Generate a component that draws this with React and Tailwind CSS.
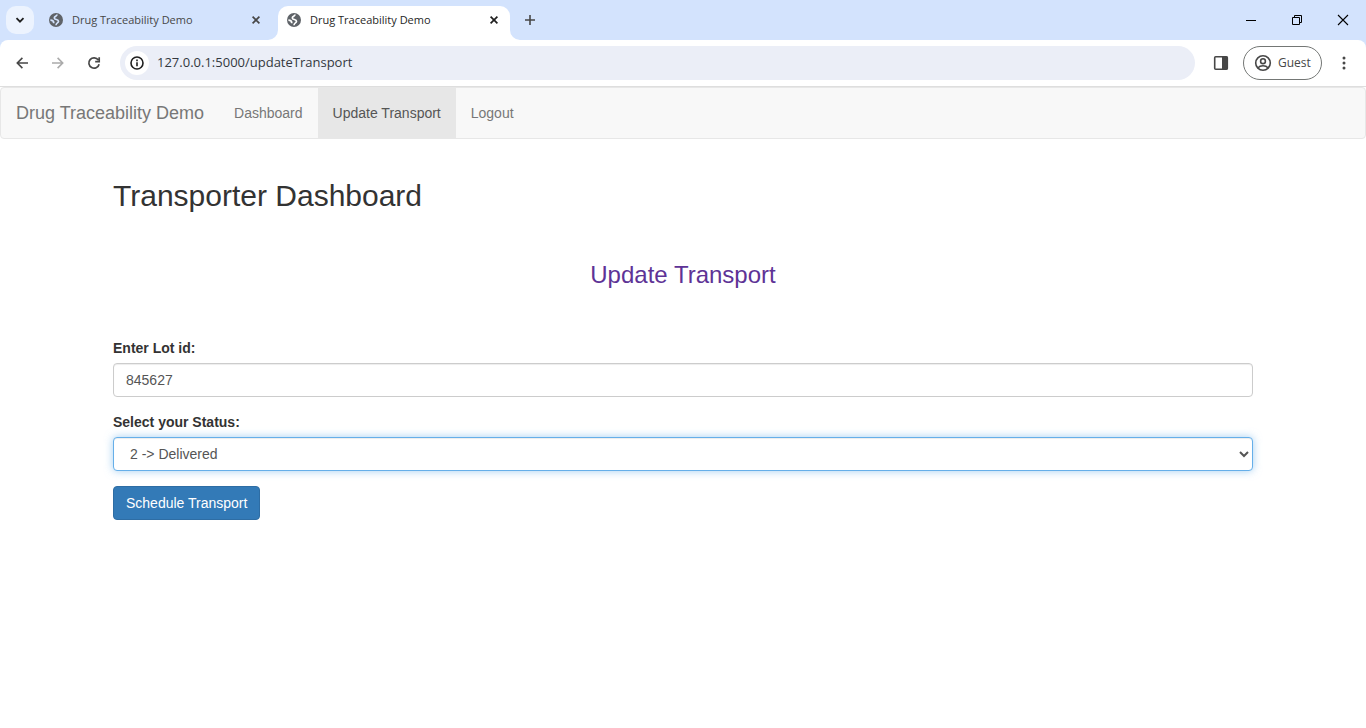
import React from "react";

const icon = { fill: "none", stroke: "currentColor" };

function Globe({ land }) {
  return (
    <svg className="h-4 w-4 shrink-0" viewBox="0 0 16 16" aria-hidden="true">
      <circle cx="8" cy="8" r="7" fill="#5f6368" />
      <g className={land} fill="none" strokeWidth="1.700">
        <path d="M9 2.600C9 4.400 6.300 4 6.300 5.900c0 2.200 4.200 1 4.200 3.400 0 1.900-2.500 1.300-2.500 4" />
        <path d="M2.400 8.200c1.800 0 3.400 1 3.400 3" />
      </g>
    </svg>
  );
}

function Cross({ className }) {
  return (
    <svg className={className} viewBox="0 0 10 10" strokeWidth="1.700" {...icon} aria-hidden="true">
      <path d="M1.600 1.600 8.400 8.400M8.400 1.600 1.600 8.400" />
    </svg>
  );
}

function Tab({ active }) {
  return (
    <div
      className={
        active
          ? "relative flex h-[34px] w-[232px] items-start rounded-t-[10px] bg-white pr-[11px] pl-2 text-[#1f1f1f]"
          : "flex h-[34px] w-[238px] items-start pr-[17px] pl-2 text-[#474747]"
      }
    >
      {active && (
        <>
          <svg className="absolute bottom-0 -left-2.5 h-2.5 w-2.5 text-white" viewBox="0 0 10 10" aria-hidden="true">
            <path fill="currentColor" d="M10 0v10H0A10 10 0 0 0 10 0Z" />
          </svg>
          <svg className="absolute -right-2.5 bottom-0 h-2.5 w-2.5 text-white" viewBox="0 0 10 10" aria-hidden="true">
            <path fill="currentColor" d="M0 0v10h10A10 10 0 0 1 0 0Z" />
          </svg>
        </>
      )}
      <div className="flex h-7 min-w-0 flex-1 items-center">
        <Globe land={active ? "stroke-white" : "stroke-[#d3e3fd]"} />
        <span className="ml-2 flex-1 truncate text-[11px] leading-4">Drug Traceability Demo</span>
        <button type="button" aria-label="Close tab">
          <Cross className="h-2.5 w-2.5" />
        </button>
      </div>
    </div>
  );
}

function TabStrip() {
  return (
    <div className="flex h-10 items-end bg-[#d3e3fd] pl-1.5">
      <button
        type="button"
        aria-label="Search tabs"
        className="mb-1.5 flex h-7 w-7 items-center justify-center rounded-[10px] bg-[#ecf3fe] text-[#1f1f1f]"
      >
        <svg className="h-2.5 w-2.5" viewBox="0 0 10 10" strokeWidth="1.800" {...icon} aria-hidden="true">
          <path d="M1.500 3.200 5 6.700 8.500 3.200" />
        </svg>
      </button>
      <div className="ml-1.5 flex">
        <Tab />
        <Tab active />
      </div>
      <button type="button" aria-label="New tab" className="mb-1.5 ml-1.5 flex h-7 w-7 items-center justify-center text-[#474747]">
        <svg className="h-3 w-3" viewBox="0 0 12 12" strokeWidth="1.600" {...icon} aria-hidden="true">
          <path d="M6 1v10M1 6h10" />
        </svg>
      </button>
      <div className="ml-auto flex h-10 text-black">
        <button type="button" aria-label="Minimize" className="flex w-[46px] items-center justify-center">
          <svg className="h-3 w-3" viewBox="0 0 12 12" {...icon} aria-hidden="true">
            <path d="M1 6.500h10" />
          </svg>
        </button>
        <button type="button" aria-label="Restore" className="flex w-[46px] items-center justify-center">
          <svg className="h-3 w-3" viewBox="0 0 12 12" {...icon} aria-hidden="true">
            <path d="M1.500 3.500h7v7h-7zM3.500 3.500v-2h7v7h-2" />
          </svg>
        </button>
        <button type="button" aria-label="Close" className="flex w-[46px] items-center justify-center">
          <svg className="h-3 w-3" viewBox="0 0 12 12" strokeWidth="1.100" {...icon} aria-hidden="true">
            <path d="M1 1l10 10M11 1 1 11" />
          </svg>
        </button>
      </div>
    </div>
  );
}

function Toolbar() {
  return (
    <div className="bg-[#d3e3fd]">
      <div className="flex h-[47px] items-center rounded-t-lg border-b border-[#dedede] bg-white pr-2 pl-2 text-[#474747]">
        <button type="button" aria-label="Back" className="flex h-7 w-7 items-center justify-center">
          <svg className="h-4 w-4" viewBox="0 0 16 16" strokeWidth="1.600" {...icon} aria-hidden="true">
            <path d="M14 8H3.500M8.400 2.900 3.300 8l5.100 5.100" />
          </svg>
        </button>
        <button type="button" aria-label="Forward" className="ml-2 flex h-7 w-7 items-center justify-center text-[#ababab]">
          <svg className="h-4 w-4" viewBox="0 0 16 16" strokeWidth="1.600" {...icon} aria-hidden="true">
            <path d="M2 8h10.500M7.600 2.900 12.700 8l-5.100 5.100" />
          </svg>
        </button>
        <button type="button" aria-label="Reload" className="ml-2 flex h-7 w-7 items-center justify-center">
          <svg className="h-4 w-4" viewBox="0 0 16 16" strokeWidth="1.700" {...icon} aria-hidden="true">
            <path d="M13.100 9.200A5.200 5.200 0 1 1 12.300 5M13.200 2.300v4.300H9.200" />
          </svg>
        </button>
        <div className="ml-3 flex h-[34px] flex-1 items-center rounded-full bg-[#ebeef7] pl-[5px]">
          <button type="button" aria-label="Site information" className="flex h-6 w-6 items-center justify-center rounded-full bg-white text-[#1f1f1f]">
            <svg className="h-4 w-4" viewBox="0 0 16 16" strokeWidth="1.600" {...icon} aria-hidden="true">
              <circle cx="8" cy="8" r="6" />
              <path d="M8 7.200v4M8 4.600v1.600" />
            </svg>
          </button>
          <input
            aria-label="Address"
            defaultValue="127.0.0.1:5000/updateTransport"
            className="ml-2 min-w-0 flex-1 bg-transparent text-[13px] text-[#333840] outline-none"
          />
        </div>
        <button type="button" aria-label="Side panel" className="ml-3 flex h-7 w-7 items-center justify-center">
          <svg className="h-4 w-4" viewBox="0 0 16 16" aria-hidden="true">
            <rect x="1.700" y="1.700" width="12.600" height="12.600" rx="1" fill="none" stroke="currentColor" strokeWidth="1.600" />
            <path fill="currentColor" d="M9 1.500h5.500v13H9z" />
          </svg>
        </button>
        <button
          type="button"
          className="ml-2 flex h-[34px] w-[79px] items-center rounded-full border border-[#747775] pl-2.5"
        >
          <svg className="h-[18px] w-[18px]" viewBox="0 0 18 18" strokeWidth="1.600" {...icon} aria-hidden="true">
            <circle cx="9" cy="9" r="7.300" />
            <circle cx="9" cy="7.200" r="2.400" />
            <path d="M3.800 14c1.300-1.500 3.100-2.200 5.200-2.200s3.900.7 5.200 2.200" />
          </svg>
          <span className="ml-1.5 text-xs">Guest</span>
        </button>
        <button type="button" aria-label="Menu" className="ml-2 flex h-7 w-7 items-center justify-center">
          <svg className="h-4 w-4" viewBox="0 0 16 16" fill="currentColor" aria-hidden="true">
            <circle cx="8" cy="3" r="1.500" />
            <circle cx="8" cy="8" r="1.500" />
            <circle cx="8" cy="13" r="1.500" />
          </svg>
        </button>
      </div>
    </div>
  );
}

function SiteNav() {
  return (
    <nav className="mb-5 flex rounded border border-[#e7e7e7] bg-[#f8f8f8] text-sm leading-5 text-[#777777]">
      <a href="#home" className="p-[15px] text-lg leading-5">
        Drug Traceability Demo
      </a>
      <a href="#dashboard" className="p-[15px]">
        Dashboard
      </a>
      <a href="#update" aria-current="page" className="bg-[#e7e7e7] p-[15px] text-[#555555]">
        Update Transport
      </a>
      <a href="#logout" className="p-[15px]">
        Logout
      </a>
    </nav>
  );
}

export default function App() {
  return (
    <div className="min-h-screen bg-white">
      <header className="font-['Open_Sans','Noto_Sans',sans-serif]">
        <TabStrip />
        <Toolbar />
      </header>
      <div className="font-['Liberation_Sans',Arial,sans-serif] text-sm leading-5 text-[#333333]">
        <SiteNav />
        <main className="mx-auto max-w-[1170px] px-[15px] pt-5">
          <h1 className="text-[30px] leading-[33px]">Transporter Dashboard</h1>
          <h2 className="mt-[50px] text-center text-2xl leading-[26px] text-[#5e3396]">Update Transport</h2>
          <form className="mt-[50px]" onSubmit={(e) => e.preventDefault()}>
            <label htmlFor="lot" className="mb-[5px] block font-bold">
              Enter Lot id:
            </label>
            <input
              id="lot"
              defaultValue="845627"
              className="mb-[15px] block h-[34px] w-full rounded border border-[#cccccc] bg-white px-3 text-[#555555] shadow-[inset_0_1px_1px_rgba(0,0,0,0.075)] outline-none"
            />
            <label htmlFor="status" className="mb-[5px] block font-bold">
              Select your Status:
            </label>
            <select
              id="status"
              defaultValue="2"
              className="mb-[15px] block h-[34px] w-full rounded border border-[#66afe9] bg-white px-3 text-[#555555] shadow-[inset_0_1px_1px_rgba(0,0,0,0.075),0_0_8px_rgba(102,175,233,0.6)] outline-none"
            >
              <option value="1">1 -&gt; Picked up</option>
              <option value="2">2 -&gt; Delivered</option>
            </select>
            <button type="submit" className="h-[34px] rounded border border-[#2e6da4] bg-[#337ab7] px-3 text-white">
              Schedule Transport
            </button>
          </form>
        </main>
      </div>
    </div>
  );
}
